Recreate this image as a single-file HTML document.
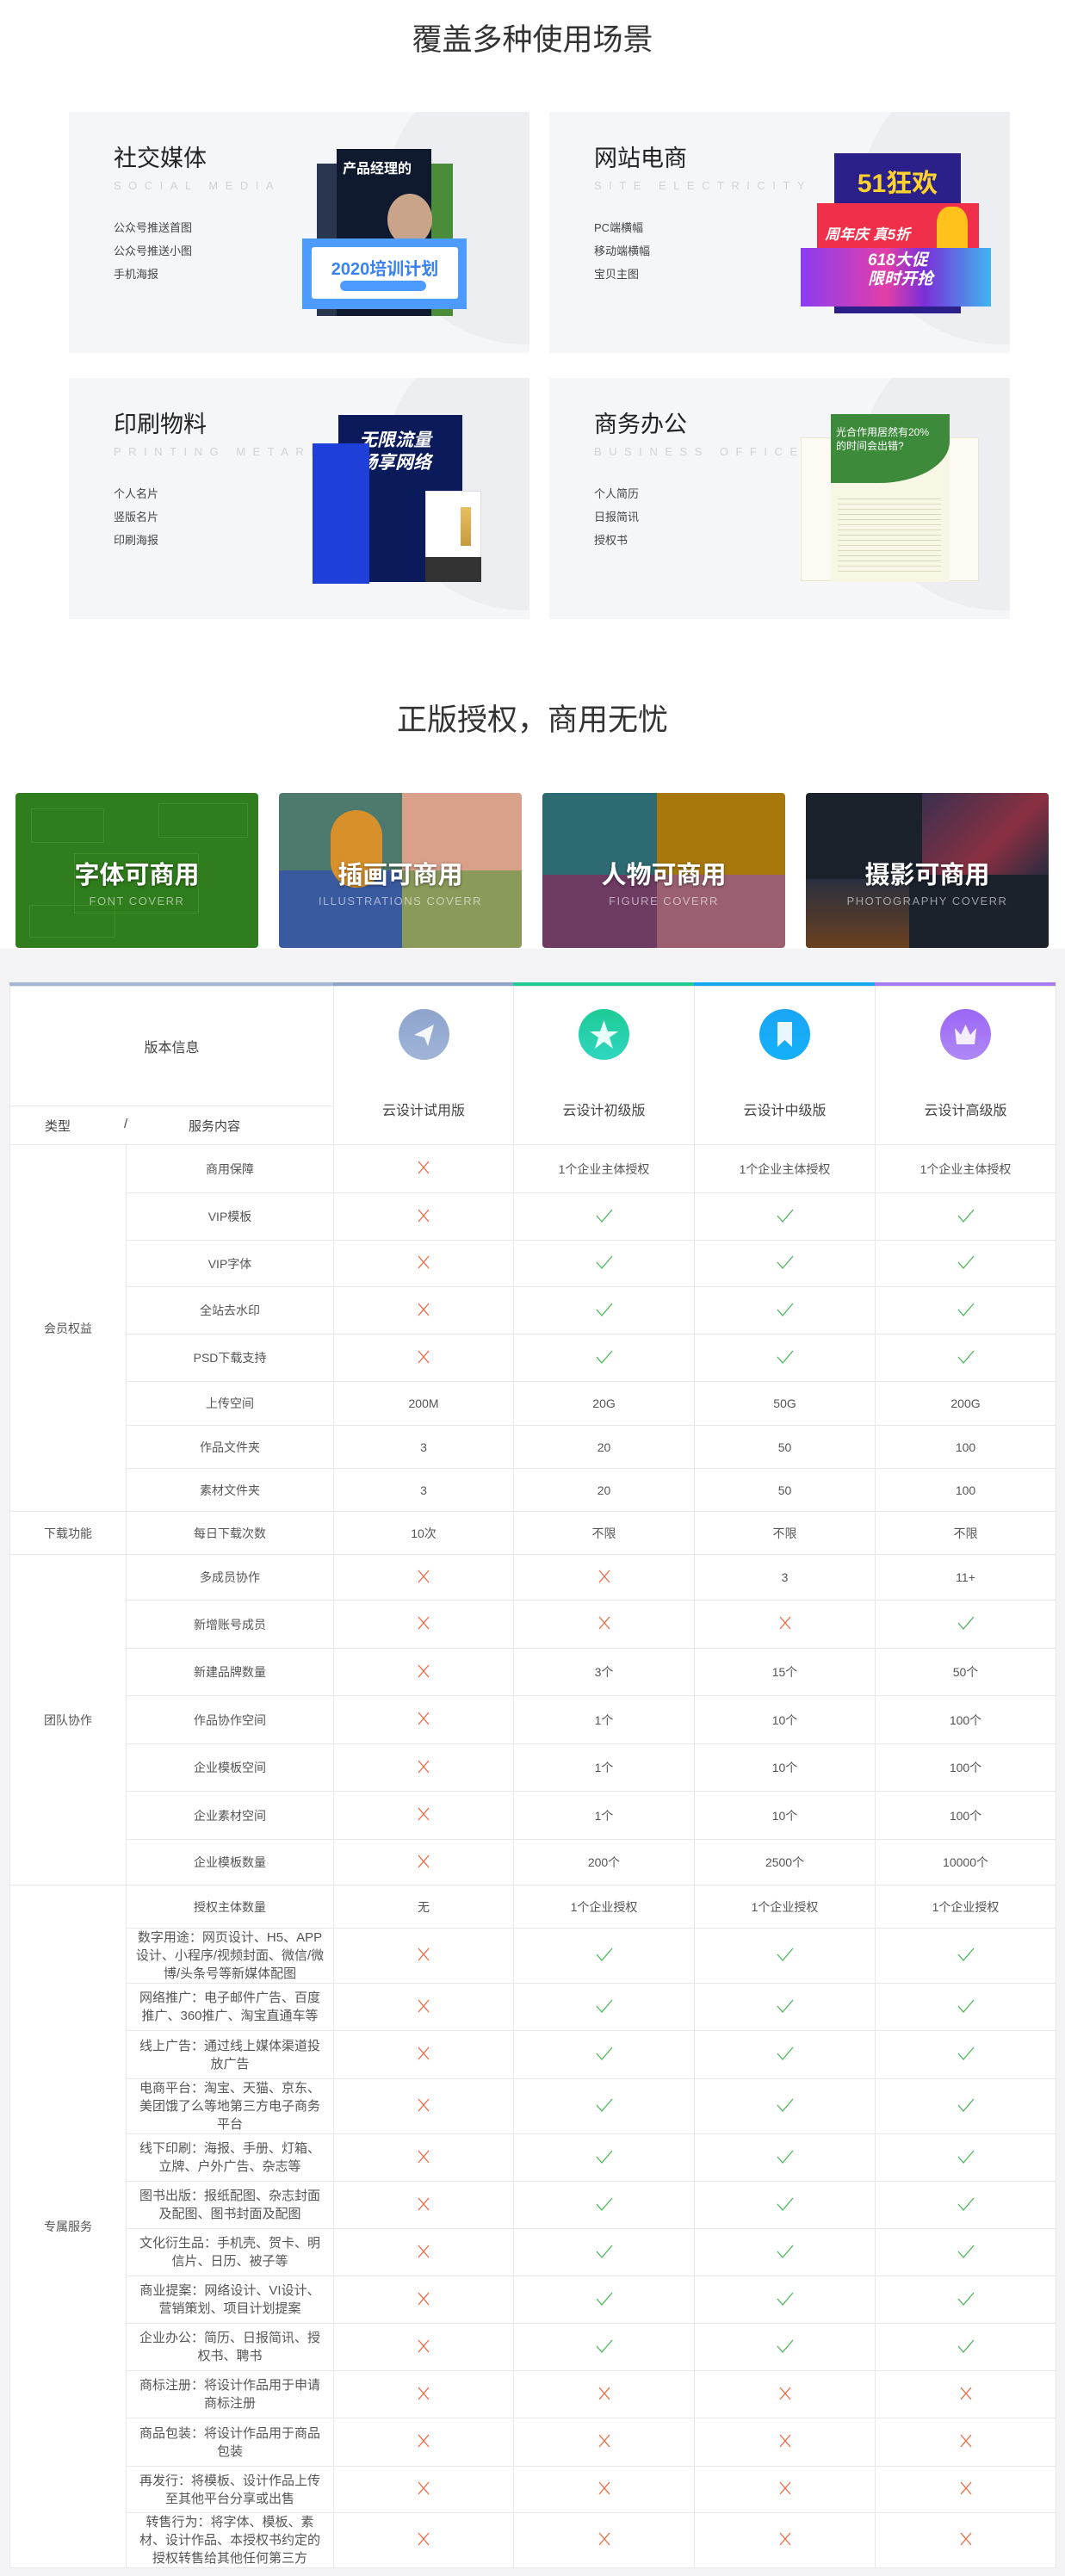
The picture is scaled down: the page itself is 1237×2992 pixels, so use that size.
<!DOCTYPE html>
<html><head><meta charset="utf-8">
<style>
*{margin:0;padding:0;box-sizing:border-box}
body{width:1237px;height:2992px;position:relative;background:#fff;font-family:"Liberation Sans","Noto Sans CJK SC",sans-serif;color:#333;overflow:hidden}
.abs{position:absolute}
.h1{position:absolute;left:0;width:1237px;text-align:center;font-size:35px;color:#333;font-weight:400}
.card{position:absolute;width:535px;height:280px;background:#f5f6f8;overflow:hidden}
.card .blob{position:absolute;border-radius:50%;background:#eceef2}
.card .t{position:absolute;left:52px;top:32px;font-size:27px;color:#222}
.card .s{position:absolute;left:52px;top:78px;font-size:13px;letter-spacing:8.5px;color:#cfd2d8;white-space:nowrap}
.card .i{position:absolute;left:52px;font-size:13px;color:#444}
.ic{position:absolute;width:282px;height:180px;border-radius:4px;overflow:hidden}
.ic .big{position:absolute;left:0;width:100%;top:72px;text-align:center;color:#fff;font-size:29px;font-weight:bold;text-shadow:0 1px 3px rgba(0,0,0,.5)}
.ic .sm{position:absolute;left:0;width:100%;top:118px;text-align:center;color:rgba(255,255,255,.55);font-size:13px;letter-spacing:1.5px}
.q{position:absolute}
table{position:absolute;left:11px;top:1145px;width:1215px;border-collapse:collapse;table-layout:fixed;background:#fff}
td{border:1px solid #e8e8e8;text-align:center;font-size:14px;color:#555;vertical-align:middle;padding:0}
td.sv{font-size:15px;line-height:21px;padding:0 9px}
td.cat{color:#555}
.vn{font-size:16px;color:#444}
</style></head><body>

<div class="h1" style="top:18px">覆盖多种使用场景</div>

<div class="card" style="left:80px;top:130px">
 <div class="blob" style="left:365px;top:-60px;width:330px;height:330px"></div>
 <div class="t">社交媒体</div><div class="s">SOCIAL MEDIA</div>
 <div class="i" style="top:124px">公众号推送首图</div><div class="i" style="top:151px">公众号推送小图</div><div class="i" style="top:178px">手机海报</div>
 <div class="q" style="left:390px;top:60px;width:56px;height:177px;background:#4a8c3a"></div>
 <div class="q" style="left:288px;top:60px;width:30px;height:177px;background:#2a3550"></div>
 <div class="q" style="left:311px;top:43px;width:110px;height:194px;background:#101a2e"></div>
 <div class="q" style="left:318px;top:52px;font-size:16px;font-weight:bold;color:#fff">产品经理的</div>
 <div class="q" style="left:370px;top:95px;width:52px;height:60px;border-radius:50%;background:#c9a48a"></div>
 <div class="q" style="left:271px;top:147px;width:191px;height:82px;background:#4d9bff"></div>
 <div class="q" style="left:282px;top:157px;width:170px;height:60px;background:#fff;border-radius:3px"></div>
 <div class="q" style="left:282px;top:166px;width:170px;text-align:center;font-size:20px;font-weight:bold;color:#3a82f0">2020培训计划</div>
 <div class="q" style="left:315px;top:196px;width:100px;height:12px;border-radius:6px;background:#4d9bff"></div>
</div>

<div class="card" style="left:638px;top:130px">
 <div class="blob" style="left:360px;top:-60px;width:330px;height:330px"></div>
 <div class="t">网站电商</div><div class="s">SITE ELECTRICITY</div>
 <div class="i" style="top:124px">PC端横幅</div><div class="i" style="top:151px">移动端横幅</div><div class="i" style="top:178px">宝贝主图</div>
 <div class="q" style="left:331px;top:48px;width:147px;height:186px;background:#2b1f8a"></div>
 <div class="q" style="left:331px;top:58px;width:147px;text-align:center;font-size:30px;font-weight:bold;color:#ffd22e">51狂欢</div>
 <div class="q" style="left:311px;top:106px;width:188px;height:54px;background:#f0304a"></div>
 <div class="q" style="left:320px;top:128px;font-size:17px;font-weight:bold;font-style:italic;color:#fff">周年庆 真5折</div>
 <div class="q" style="left:450px;top:110px;width:36px;height:48px;background:#ffc21a;border-radius:40% 40% 0 0"></div>
 <div class="q" style="left:292px;top:158px;width:221px;height:68px;background:linear-gradient(90deg,#8a3df0,#e23fa8 45%,#7a2fd8 65%,#3fb6f0)"></div>
 <div class="q" style="left:370px;top:162px;font-size:19px;font-weight:bold;font-style:italic;color:#fff;line-height:22px">618大促<br>限时开抢</div>
</div>

<div class="card" style="left:80px;top:439px">
 <div class="blob" style="left:365px;top:-60px;width:330px;height:330px"></div>
 <div class="t">印刷物料</div><div class="s">PRINTING METARIAL</div>
 <div class="i" style="top:124px">个人名片</div><div class="i" style="top:151px">竖版名片</div><div class="i" style="top:178px">印刷海报</div>
 <div class="q" style="left:313px;top:43px;width:144px;height:194px;background:#0a1a5a"></div>
 <div class="q" style="left:337px;top:60px;font-size:21px;font-weight:bold;font-style:italic;color:#fff;line-height:26px">无限流量<br>畅享网络</div>
 <div class="q" style="left:283px;top:76px;width:66px;height:163px;background:#1e3fd8"></div>
 <div class="q" style="left:414px;top:131px;width:65px;height:106px;background:#fff;border:1px solid #ddd"></div>
 <div class="q" style="left:414px;top:208px;width:65px;height:29px;background:#333"></div>
 <div class="q" style="left:455px;top:150px;width:12px;height:45px;background:linear-gradient(#e8c060,#c89a40)"></div>
</div>

<div class="card" style="left:638px;top:439px">
 <div class="blob" style="left:360px;top:-60px;width:330px;height:330px"></div>
 <div class="t">商务办公</div><div class="s">BUSINESS OFFICE</div>
 <div class="i" style="top:124px">个人简历</div><div class="i" style="top:151px">日报简讯</div><div class="i" style="top:178px">授权书</div>
 <div class="q" style="left:292px;top:69px;width:207px;height:167px;background:#fcfaf2;border:1px solid #ece6d0"></div>
 <div class="q" style="left:327px;top:42px;width:138px;height:195px;background:#f8f6e4"></div>
 <div class="q" style="left:327px;top:42px;width:138px;height:80px;background:#3c8a3a;border-radius:0 0 60% 0"></div>
 <div class="q" style="left:333px;top:55px;font-size:12px;color:#fff;line-height:16px">光合作用居然有20%<br>的时间会出错?</div>
 <div class="q" style="left:335px;top:135px;width:120px;height:90px;background:repeating-linear-gradient(#f8f6e4 0 5px,#ddd8c0 5px 6px)"></div>
</div>

<div class="h1" style="top:808px">正版授权，商用无忧</div>

<div class="ic" style="left:18px;top:921px;background:#2f7d1c">
 <div class="q" style="left:18px;top:18px;width:85px;height:40px;border:1px solid #3d8f28"></div>
 <div class="q" style="left:166px;top:12px;width:104px;height:40px;border:1px solid #3d8f28"></div>
 <div class="q" style="left:68px;top:70px;width:145px;height:70px;border:1px solid #3d8f28"></div>
 <div class="q" style="left:16px;top:130px;width:100px;height:38px;border:1px solid #3d8f28"></div>
 <div class="big">字体可商用</div><div class="sm">FONT COVERR</div>
</div>
<div class="ic" style="left:324px;top:921px">
 <div class="q" style="left:0;top:0;width:143px;height:90px;background:#4d7a6c"></div>
 <div class="q" style="left:143px;top:0;width:139px;height:90px;background:#d9a08a"></div>
 <div class="q" style="left:0;top:90px;width:143px;height:90px;background:#3a5aa0"></div>
 <div class="q" style="left:143px;top:90px;width:139px;height:90px;background:#8a9a5a"></div>
 <div class="q" style="left:60px;top:20px;width:60px;height:90px;background:#d8902a;border-radius:30px"></div>
 <div class="big">插画可商用</div><div class="sm">ILLUSTRATIONS COVERR</div>
</div>
<div class="ic" style="left:630px;top:921px">
 <div class="q" style="left:0;top:0;width:133px;height:95px;background:#2e6a72"></div>
 <div class="q" style="left:133px;top:0;width:149px;height:95px;background:#a8780c"></div>
 <div class="q" style="left:0;top:95px;width:133px;height:85px;background:#6e3b62"></div>
 <div class="q" style="left:133px;top:95px;width:149px;height:85px;background:#9a6070"></div>
 <div class="big">人物可商用</div><div class="sm">FIGURE COVERR</div>
</div>
<div class="ic" style="left:936px;top:921px;background:#1b222c">
 <div class="q" style="left:135px;top:0;width:147px;height:95px;background:linear-gradient(135deg,#3a3050,#8a3040 60%,#2a2a40)"></div>
 <div class="q" style="left:0;top:100px;width:120px;height:80px;background:linear-gradient(#2a3040,#6a4020)"></div>
 <div class="big">摄影可商用</div><div class="sm">PHOTOGRAPHY COVERR</div>
</div>

<div class="abs" style="left:0;top:1102px;width:1237px;height:1890px;background:#f4f4f6"></div>
<div class="abs" style="left:11px;top:1141px;width:376px;height:4px;background:#a3b5d0"></div>
<div class="abs" style="left:387px;top:1141px;width:209px;height:4px;background:#8ea4c9"></div>
<div class="abs" style="left:596px;top:1141px;width:210px;height:4px;background:#1fcb95"></div>
<div class="abs" style="left:806px;top:1141px;width:210px;height:4px;background:#14a6f2"></div>
<div class="abs" style="left:1016px;top:1141px;width:210px;height:4px;background:#a57bf4"></div>

<svg width="0" height="0" style="position:absolute">
 <defs>
  <symbol id="x" viewBox="0 0 20 20"><path d="M4 3 L16 17 M16 3 L4 17" stroke="#f2673f" stroke-width="1.3" fill="none"/></symbol>
  <symbol id="v" viewBox="0 0 24 20"><path d="M3 10 L9 17 L21 3" stroke="#4cb85a" stroke-width="1.3" fill="none"/></symbol>
 </defs>
</svg>

<table>
<colgroup><col style="width:135px"><col style="width:241px"><col style="width:209px"><col style="width:210px"><col style="width:210px"><col style="width:210px"></colgroup>
<tr style="height:139px"><td colspan="2" style="border-bottom:1px solid #e8e8e8;font-size:16px;color:#444">版本信息</td>
<td rowspan="2" style="position:relative"><div style="position:absolute;left:75px;top:26px;width:59px;height:59px;border-radius:50%;background:linear-gradient(#8ea4cc,#a0b4d8)"><svg width="59" height="59" viewBox="0 0 59 59"><path d="M18 30 L41 18 L34 43 L30 33 Z" fill="#fff" opacity=".9"/></svg></div><div class="vn" style="position:absolute;left:0;width:100%;top:130px">云设计试用版</div></td>
<td rowspan="2" style="position:relative"><div style="position:absolute;left:75px;top:26px;width:59px;height:59px;border-radius:50%;background:linear-gradient(#1ecb95,#2ed6c0)"><svg width="59" height="59" viewBox="0 0 59 59"><path d="M29.5 13 L34 26 L46 26 L36 33 L40 46 L29.5 38 L19 46 L23 33 L13 26 L25 26 Z" fill="#e6fff7"/></svg></div><div class="vn" style="position:absolute;left:0;width:100%;top:130px">云设计初级版</div></td>
<td rowspan="2" style="position:relative"><div style="position:absolute;left:75px;top:26px;width:59px;height:59px;border-radius:50%;background:linear-gradient(#1aa6f5,#14b0f8)"><svg width="59" height="59" viewBox="0 0 59 59"><path d="M21 15 H38 V44 L29.5 36 L21 44 Z" fill="#e8f6ff"/></svg></div><div class="vn" style="position:absolute;left:0;width:100%;top:130px">云设计中级版</div></td>
<td rowspan="2" style="position:relative"><div style="position:absolute;left:75px;top:26px;width:59px;height:59px;border-radius:50%;background:linear-gradient(#9a66f4,#b088f8)"><svg width="59" height="59" viewBox="0 0 59 59"><path d="M17 22 L24 30 L29.5 18 L35 30 L42 22 L40 41 H19 Z" fill="#f5eeff"/></svg></div><div class="vn" style="position:absolute;left:0;width:100%;top:130px">云设计高级版</div></td></tr>
<tr style="height:45px"><td colspan="2" style="position:relative;font-size:15px;color:#444"><span style="position:absolute;left:40px;top:12px">类型</span><span style="position:absolute;left:132px;top:12px">/</span><span style="position:absolute;left:207px;top:12px">服务内容</span></td></tr>

<tr style="height:56px"><td rowspan="8" class="cat">会员权益</td><td>商用保障</td><td><svg width="20" height="20"><use href="#x"/></svg></td><td>1个企业主体授权</td><td>1个企业主体授权</td><td>1个企业主体授权</td></tr>
<tr style="height:55px"><td>VIP模板</td><td><svg width="20" height="20"><use href="#x"/></svg></td><td><svg width="24" height="20"><use href="#v"/></svg></td><td><svg width="24" height="20"><use href="#v"/></svg></td><td><svg width="24" height="20"><use href="#v"/></svg></td></tr>
<tr style="height:54px"><td>VIP字体</td><td><svg width="20" height="20"><use href="#x"/></svg></td><td><svg width="24" height="20"><use href="#v"/></svg></td><td><svg width="24" height="20"><use href="#v"/></svg></td><td><svg width="24" height="20"><use href="#v"/></svg></td></tr>
<tr style="height:55px"><td>全站去水印</td><td><svg width="20" height="20"><use href="#x"/></svg></td><td><svg width="24" height="20"><use href="#v"/></svg></td><td><svg width="24" height="20"><use href="#v"/></svg></td><td><svg width="24" height="20"><use href="#v"/></svg></td></tr>
<tr style="height:55px"><td>PSD下载支持</td><td><svg width="20" height="20"><use href="#x"/></svg></td><td><svg width="24" height="20"><use href="#v"/></svg></td><td><svg width="24" height="20"><use href="#v"/></svg></td><td><svg width="24" height="20"><use href="#v"/></svg></td></tr>
<tr style="height:51px"><td>上传空间</td><td>200M</td><td>20G</td><td>50G</td><td>200G</td></tr>
<tr style="height:50px"><td>作品文件夹</td><td>3</td><td>20</td><td>50</td><td>100</td></tr>
<tr style="height:50px"><td>素材文件夹</td><td>3</td><td>20</td><td>50</td><td>100</td></tr>
<tr style="height:50px"><td class="cat">下载功能</td><td>每日下载次数</td><td>10次</td><td>不限</td><td>不限</td><td>不限</td></tr>
<tr style="height:53px"><td rowspan="7" class="cat">团队协作</td><td>多成员协作</td><td><svg width="20" height="20"><use href="#x"/></svg></td><td><svg width="20" height="20"><use href="#x"/></svg></td><td>3</td><td>11+</td></tr>
<tr style="height:56px"><td>新增账号成员</td><td><svg width="20" height="20"><use href="#x"/></svg></td><td><svg width="20" height="20"><use href="#x"/></svg></td><td><svg width="20" height="20"><use href="#x"/></svg></td><td><svg width="24" height="20"><use href="#v"/></svg></td></tr>
<tr style="height:55px"><td>新建品牌数量</td><td><svg width="20" height="20"><use href="#x"/></svg></td><td>3个</td><td>15个</td><td>50个</td></tr>
<tr style="height:56px"><td>作品协作空间</td><td><svg width="20" height="20"><use href="#x"/></svg></td><td>1个</td><td>10个</td><td>100个</td></tr>
<tr style="height:55px"><td>企业模板空间</td><td><svg width="20" height="20"><use href="#x"/></svg></td><td>1个</td><td>10个</td><td>100个</td></tr>
<tr style="height:56px"><td>企业素材空间</td><td><svg width="20" height="20"><use href="#x"/></svg></td><td>1个</td><td>10个</td><td>100个</td></tr>
<tr style="height:53px"><td>企业模板数量</td><td><svg width="20" height="20"><use href="#x"/></svg></td><td>200个</td><td>2500个</td><td>10000个</td></tr>
<tr style="height:50px"><td rowspan="14" class="cat">专属服务</td><td>授权主体数量</td><td>无</td><td>1个企业授权</td><td>1个企业授权</td><td>1个企业授权</td></tr>
<tr style="height:63px"><td class="sv">数字用途：网页设计、H5、APP设计、小程序/视频封面、微信/微博/头条号等新媒体配图</td><td><svg width="20" height="20"><use href="#x"/></svg></td><td><svg width="24" height="20"><use href="#v"/></svg></td><td><svg width="24" height="20"><use href="#v"/></svg></td><td><svg width="24" height="20"><use href="#v"/></svg></td></tr>
<tr style="height:55px"><td class="sv">网络推广：电子邮件广告、百度推广、360推广、淘宝直通车等</td><td><svg width="20" height="20"><use href="#x"/></svg></td><td><svg width="24" height="20"><use href="#v"/></svg></td><td><svg width="24" height="20"><use href="#v"/></svg></td><td><svg width="24" height="20"><use href="#v"/></svg></td></tr>
<tr style="height:56px"><td class="sv">线上广告：通过线上媒体渠道投放广告</td><td><svg width="20" height="20"><use href="#x"/></svg></td><td><svg width="24" height="20"><use href="#v"/></svg></td><td><svg width="24" height="20"><use href="#v"/></svg></td><td><svg width="24" height="20"><use href="#v"/></svg></td></tr>
<tr style="height:63px"><td class="sv">电商平台：淘宝、天猫、京东、美团饿了么等地第三方电子商务平台</td><td><svg width="20" height="20"><use href="#x"/></svg></td><td><svg width="24" height="20"><use href="#v"/></svg></td><td><svg width="24" height="20"><use href="#v"/></svg></td><td><svg width="24" height="20"><use href="#v"/></svg></td></tr>
<tr style="height:55px"><td class="sv">线下印刷：海报、手册、灯箱、立牌、户外广告、杂志等</td><td><svg width="20" height="20"><use href="#x"/></svg></td><td><svg width="24" height="20"><use href="#v"/></svg></td><td><svg width="24" height="20"><use href="#v"/></svg></td><td><svg width="24" height="20"><use href="#v"/></svg></td></tr>
<tr style="height:55px"><td class="sv">图书出版：报纸配图、杂志封面及配图、图书封面及配图</td><td><svg width="20" height="20"><use href="#x"/></svg></td><td><svg width="24" height="20"><use href="#v"/></svg></td><td><svg width="24" height="20"><use href="#v"/></svg></td><td><svg width="24" height="20"><use href="#v"/></svg></td></tr>
<tr style="height:55px"><td class="sv">文化衍生品：手机壳、贺卡、明信片、日历、被子等</td><td><svg width="20" height="20"><use href="#x"/></svg></td><td><svg width="24" height="20"><use href="#v"/></svg></td><td><svg width="24" height="20"><use href="#v"/></svg></td><td><svg width="24" height="20"><use href="#v"/></svg></td></tr>
<tr style="height:55px"><td class="sv">商业提案：网络设计、VI设计、营销策划、项目计划提案</td><td><svg width="20" height="20"><use href="#x"/></svg></td><td><svg width="24" height="20"><use href="#v"/></svg></td><td><svg width="24" height="20"><use href="#v"/></svg></td><td><svg width="24" height="20"><use href="#v"/></svg></td></tr>
<tr style="height:55px"><td class="sv">企业办公：简历、日报简讯、授权书、聘书</td><td><svg width="20" height="20"><use href="#x"/></svg></td><td><svg width="24" height="20"><use href="#v"/></svg></td><td><svg width="24" height="20"><use href="#v"/></svg></td><td><svg width="24" height="20"><use href="#v"/></svg></td></tr>
<tr style="height:55px"><td class="sv">商标注册：将设计作品用于申请商标注册</td><td><svg width="20" height="20"><use href="#x"/></svg></td><td><svg width="20" height="20"><use href="#x"/></svg></td><td><svg width="20" height="20"><use href="#x"/></svg></td><td><svg width="20" height="20"><use href="#x"/></svg></td></tr>
<tr style="height:56px"><td class="sv">商品包装：将设计作品用于商品包装</td><td><svg width="20" height="20"><use href="#x"/></svg></td><td><svg width="20" height="20"><use href="#x"/></svg></td><td><svg width="20" height="20"><use href="#x"/></svg></td><td><svg width="20" height="20"><use href="#x"/></svg></td></tr>
<tr style="height:54px"><td class="sv">再发行：将模板、设计作品上传至其他平台分享或出售</td><td><svg width="20" height="20"><use href="#x"/></svg></td><td><svg width="20" height="20"><use href="#x"/></svg></td><td><svg width="20" height="20"><use href="#x"/></svg></td><td><svg width="20" height="20"><use href="#x"/></svg></td></tr>
<tr style="height:64px"><td class="sv">转售行为：将字体、模板、素材、设计作品、本授权书约定的授权转售给其他任何第三方</td><td><svg width="20" height="20"><use href="#x"/></svg></td><td><svg width="20" height="20"><use href="#x"/></svg></td><td><svg width="20" height="20"><use href="#x"/></svg></td><td><svg width="20" height="20"><use href="#x"/></svg></td></tr>
</table>
</body></html>
